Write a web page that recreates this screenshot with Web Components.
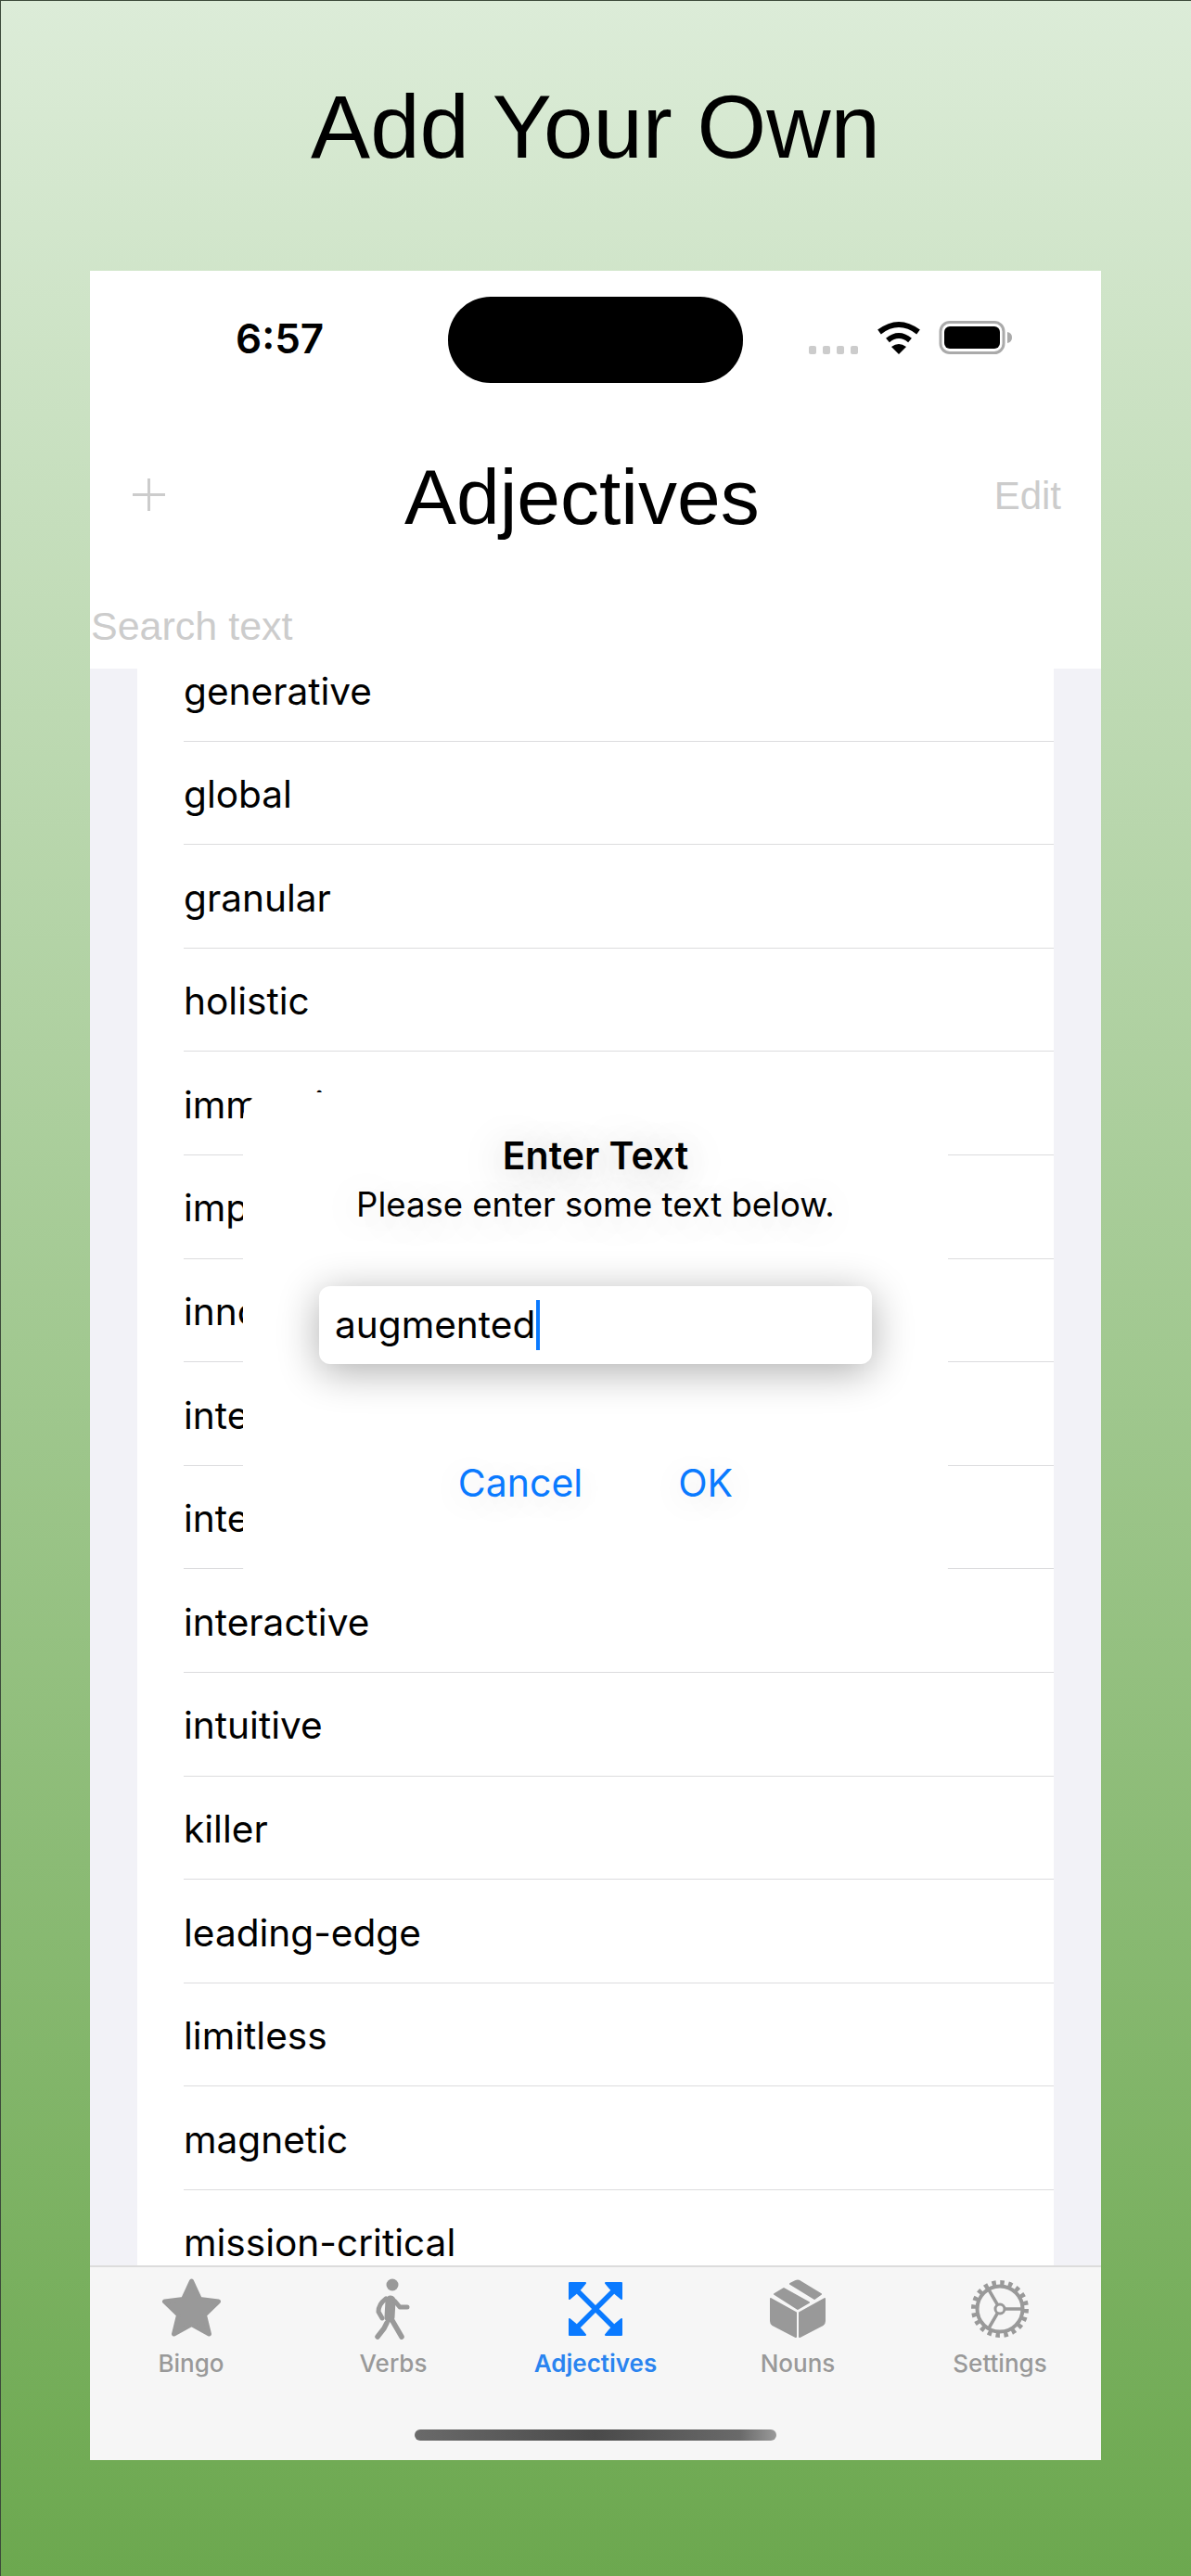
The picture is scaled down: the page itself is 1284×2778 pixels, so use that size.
<!DOCTYPE html>
<html>
<head>
<meta charset="utf-8">
<title>Add Your Own</title>
<style>
html, body { margin: 0; padding: 0; }
body { width: 1284px; height: 2778px; overflow: hidden; font-family: "Liberation Sans", sans-serif; }
</style>
</head>
<body>
<promo-page>
	<span slot="title">Add Your Own</span>
	<phone-screen>
		<status-bar slot="status" time="6:57"></status-bar>
		<nav-bar slot="nav" heading="Adjectives"></nav-bar>
		<search-box slot="search" placeholder="Search text"></search-box>
		<word-list slot="list">
			<word-row>generative</word-row>
			<word-row>global</word-row>
			<word-row>granular</word-row>
			<word-row>holistic</word-row>
			<word-row>immersive</word-row>
			<word-row>impactful</word-row>
			<word-row>innovative</word-row>
			<word-row>integrated</word-row>
			<word-row>intelligent</word-row>
			<word-row>interactive</word-row>
			<word-row>intuitive</word-row>
			<word-row>killer</word-row>
			<word-row>leading-edge</word-row>
			<word-row>limitless</word-row>
			<word-row>magnetic</word-row>
			<word-row>mission-critical</word-row>
		</word-list>
		<tab-bar slot="tabs">
			<tab-item label="Bingo" icon="star"></tab-item>
			<tab-item label="Verbs" icon="walk"></tab-item>
			<tab-item label="Adjectives" icon="expand" active></tab-item>
			<tab-item label="Nouns" icon="box"></tab-item>
			<tab-item label="Settings" icon="gear"></tab-item>
		</tab-bar>
		<text-dialog slot="dialog" heading="Enter Text" message="Please enter some text below." value="augmented"></text-dialog>
	</phone-screen>
</promo-page>

<script>
const ICONS = {
	star: `<svg width="69" height="66" viewBox="0 0 69 66"><path fill="#999" stroke="#999" stroke-width="5" stroke-linejoin="round" d="M34.5 3 L43.5 22.5 L63.5 25 L48.5 39.5 L53.5 60 L34.5 49.5 L15.5 60 L20.5 39.5 L5.5 25 L25.5 22.5 Z"/></svg>`,
	walk: `<svg width="42" height="66" viewBox="0 0 42 66"><g fill="none" stroke="#999" stroke-linecap="round" stroke-linejoin="round"><path stroke-width="11" d="M18 24 L17 42"/><path stroke-width="5" d="M13 22 Q5 28 5 36 L9 43"/><path stroke-width="5" d="M23 25 L28 31 L36 31"/><path stroke-width="5.5" d="M19 44 L30 63"/><path stroke-width="5.5" d="M14 48 L11 54 L4 63"/></g><circle cx="20" cy="7" r="6.5" fill="#999"/></svg>`,
	expand: `<svg width="58" height="58" viewBox="0 0 58 58"><path stroke="#0a7aff" stroke-width="5.5" d="M8 8 L50 50 M50 8 L8 50"/><g fill="#0a7aff" stroke="#0a7aff" stroke-width="2" stroke-linejoin="round"><path d="M1 1 H18 L13 7 L7 13 L1 18 Z"/><path d="M57 1 H40 L45 7 L51 13 L57 18 Z"/><path d="M1 57 H18 L13 51 L7 45 L1 40 Z"/><path d="M57 57 H40 L45 51 L51 45 L57 40 Z"/></g></svg>`,
	box: `<svg width="60" height="64" viewBox="0 0 60 64"><g fill="#999" stroke="#999" stroke-width="2" stroke-linejoin="round"><path d="M1 21 L28 36 V62 L3 49 Q1 48 1 45 Z"/><path d="M59 21 L32 36 V62 L57 49 Q59 48 59 45 Z"/><path d="M5 16 L15 10 L42 25 L30 32 Z"/><path d="M22 5 L28 2 Q30 1 32 2 L55 16 L48 21 Z"/></g></svg>`,
	gear: `<svg width="66" height="66" viewBox="0 0 66 66"><g fill="none" stroke="#999"><circle cx="33" cy="33" r="24.5" stroke-width="4"/><circle cx="33" cy="33" r="28" stroke-width="6" stroke-dasharray="4.4 4.4"/><circle cx="33" cy="33" r="5" stroke-width="3"/><path stroke-width="3.5" d="M38 33 H58 M30.5 28.7 L20.5 11.5 M30.5 37.3 L20.5 54.5"/></g></svg>`,
};

class PromoPage extends HTMLElement {
	constructor() {
		super();
		this.attachShadow({ mode: 'open' });
		this.shadowRoot.innerHTML = `
    <style>
      :host {
        display: block;
        box-sizing: border-box;
        width: 1284px;
        height: 2778px;
        padding: 0 97px;
        background: linear-gradient(#dcecd8, #6ca84f);
        box-shadow: inset 1px 1px 0 #3c4a3a;
      }
      h1 {
        margin: 0;
        height: 292px;
        padding-top: 82px;
        box-sizing: border-box;
        text-align: center;
        font: 400 96px/110px "Liberation Sans", sans-serif;
        color: #000;
      }
    </style>
    <h1><slot name="title"></slot></h1>
    <slot></slot>`;
	}
}
customElements.define('promo-page', PromoPage);

class PhoneScreen extends HTMLElement {
	constructor() {
		super();
		this.attachShadow({ mode: 'open' });
		this.shadowRoot.innerHTML = `
    <style>
      :host {
        display: flex;
        flex-direction: column;
        position: relative;
        width: 1090px;
        height: 2361px;
        background: #fff;
        overflow: hidden;
      }
    </style>
    <slot name="status"></slot>
    <slot name="nav"></slot>
    <slot name="search"></slot>
    <slot name="list"></slot>
    <slot name="tabs"></slot>
    <slot name="dialog"></slot>`;
	}
}
customElements.define('phone-screen', PhoneScreen);

class StatusBar extends HTMLElement {
	constructor() {
		super();
		this.attachShadow({ mode: 'open' });
		this.shadowRoot.innerHTML = `
    <style>
      :host {
        display: flex;
        align-items: flex-start;
        box-sizing: border-box;
        height: 149px;
        padding: 28px 0 0 157px;
      }
      .time {
        width: 95px;
        margin-top: 23px;
        font: 600 44px/44px Inter, sans-serif;
        color: #000;
        white-space: nowrap;
      }
      .island {
        width: 318px;
        height: 93px;
        margin-left: 134px;
        border-radius: 46px;
        background: #000;
      }
      svg { margin: 26px 0 0 71px; }
    </style>
    <div class="time">${this.getAttribute('time')}</div>
    <div class="island"></div>
    <svg width="220" height="38" viewBox="0 0 220 38">
      <g fill="#ccc">
        <rect x="0" y="27" width="8" height="9" rx="2"/>
        <rect x="15" y="27" width="8" height="9" rx="2"/>
        <rect x="30" y="27" width="8" height="9" rx="2"/>
        <rect x="45" y="27" width="8" height="9" rx="2"/>
      </g>
      <g fill="none" stroke="#000" stroke-width="6">
        <path d="M76 12 Q97 -4 118 12"/>
        <path d="M85 21 Q97 11 109 21"/>
      </g>
      <path d="M89 28 Q97 22 105 28 L97 36 Z" fill="#000"/>
      <rect x="142" y="1.5" width="68" height="33" rx="10" fill="none" stroke="#aaa" stroke-width="3"/>
      <rect x="146" y="6" width="60" height="24" rx="6" fill="#000"/>
      <path d="M214 12 Q219 13 219 18 Q219 23 214 24 Z" fill="#aaa"/>
    </svg>`;
	}
}
customElements.define('status-bar', StatusBar);

class NavBar extends HTMLElement {
	constructor() {
		super();
		this.attachShadow({ mode: 'open' });
		this.shadowRoot.innerHTML = `
    <style>
      :host {
        display: flex;
        align-items: center;
        justify-content: space-between;
        box-sizing: border-box;
        height: 190px;
        padding: 0 43px 0 46px;
      }
      svg { display: block; margin-top: -6px; }
      .title {
        font: 400 84px/96px "Liberation Sans", sans-serif;
        color: #000;
        margin-left: 5px;
      }
      .edit {
        margin-top: -2px;
        font: 400 42px/48px "Liberation Sans", sans-serif;
        color: #ccc;
      }
    </style>
    <svg width="35" height="35" viewBox="0 0 35 35"><path d="M17.5 0 V35 M0 17.5 H35" stroke="#ccc" stroke-width="3" fill="none"/></svg>
    <div class="title">${this.getAttribute('heading')}</div>
    <div class="edit">Edit</div>`;
	}
}
customElements.define('nav-bar', NavBar);

class SearchBox extends HTMLElement {
	constructor() {
		super();
		this.attachShadow({ mode: 'open' });
		this.shadowRoot.innerHTML = `
    <style>
      :host {
        display: block;
        box-sizing: border-box;
        height: 90px;
        padding: 19px 0 0 1px;
        font: 400 43px/50px "Liberation Sans", sans-serif;
        color: #ccc;
      }
    </style>
    ${this.getAttribute('placeholder')}`;
	}
}
customElements.define('search-box', SearchBox);

class WordList extends HTMLElement {
	constructor() {
		super();
		this.attachShadow({ mode: 'open' });
		this.shadowRoot.innerHTML = `
    <style>
      :host {
        display: block;
        flex: 1;
        min-height: 0;
        overflow: hidden;
        padding: 0 51px;
        background: #f2f2f7;
      }
      .rows {
        margin-top: -33px;
        background: #fff;
      }
    </style>
    <div class="rows"><slot></slot></div>`;
	}
}
customElements.define('word-list', WordList);

class WordRow extends HTMLElement {
	constructor() {
		super();
		this.attachShadow({ mode: 'open' });
		this.shadowRoot.innerHTML = `
    <style>
      :host {
        display: block;
        padding-left: 50px;
        font: 400 40.6px/1 Inter, sans-serif;
        color: #000;
      }
      div {
        box-sizing: border-box;
        display: flex;
        align-items: center;
        height: 111.6px;
        padding-top: 5px;
        border-bottom: 1.5px solid #dcdcde;
      }
    </style>
    <div><slot></slot></div>`;
	}
}
customElements.define('word-row', WordRow);

class TabBar extends HTMLElement {
	constructor() {
		super();
		this.attachShadow({ mode: 'open' });
		this.shadowRoot.innerHTML = `
    <style>
      :host {
        display: block;
        box-sizing: border-box;
        height: 210px;
        padding-top: 12px;
        background: #f6f6f6;
        border-top: 2px solid #dcdcdc;
      }
      .items {
        display: grid;
        grid-template-columns: repeat(5, 1fr);
      }
      .home {
        width: 390px;
        height: 12px;
        margin: 55px auto 0;
        border-radius: 6px;
        background: linear-gradient(90deg, #6a6a6a, #4a4a4a 50%, #6a6a6a 90%, #9a9a9a);
      }
    </style>
    <div class="items"><slot></slot></div>
    <div class="home"></div>`;
	}
}
customElements.define('tab-bar', TabBar);

class TabItem extends HTMLElement {
	constructor() {
		super();
		this.attachShadow({ mode: 'open' });
		this.shadowRoot.innerHTML = `
    <style>
      :host {
        display: flex;
        flex-direction: column;
        align-items: center;
        font: 500 26px/32px Inter, sans-serif;
        color: #999;
      }
      :host([active]) { color: #2a84f0; font-weight: 600; }
      .icon {
        display: flex;
        align-items: center;
        justify-content: center;
        height: 66px;
        margin-bottom: 10px;
      }
    </style>
    <div class="icon">${ICONS[this.getAttribute('icon')]}</div>
    <div>${this.getAttribute('label')}</div>`;
	}
}
customElements.define('tab-item', TabItem);

class TextDialog extends HTMLElement {
	constructor() {
		super();
		this.attachShadow({ mode: 'open' });
		this.shadowRoot.innerHTML = `
    <style>
      :host {
        display: flex;
        flex-direction: column;
        align-items: center;
        position: absolute;
        left: 165px;
        top: 886px;
        box-sizing: border-box;
        width: 760px;
        height: 540px;
        padding-top: 44px;
        border-radius: 28px;
        background: #fff;
        font-family: Inter, sans-serif;
        color: #000;
      }
      .title {
        font: 600 41px/48px Inter, sans-serif;
        text-shadow: 0 6px 44px rgba(0,0,0,.28);
      }
      .message {
        margin-top: 6px;
        font: 400 36.5px/46px Inter, sans-serif;
        text-shadow: 0 6px 44px rgba(0,0,0,.18);
      }
      .field {
        display: flex;
        align-items: center;
        box-sizing: border-box;
        width: 596px;
        height: 84px;
        margin-top: 65px;
        padding-left: 17px;
        border-radius: 12px;
        background: #fff;
        box-shadow: 0 8px 44px rgba(0,0,0,.32);
        font: 400 40.6px/1 Inter, sans-serif;
      }
      .caret {
        width: 4px;
        height: 54px;
        margin-left: 1px;
        background: #0a7aff;
      }
      .actions {
        display: flex;
        gap: 103px;
        margin-top: 102px;
        font: 400 41px/52px Inter, sans-serif;
        color: #0a7aff;
        text-shadow: 0 6px 36px rgba(0,0,0,.14);
      }
    </style>
    <div class="title">${this.getAttribute('heading')}</div>
    <div class="message">${this.getAttribute('message')}</div>
    <div class="field"><span>${this.getAttribute('value')}</span><div class="caret"></div></div>
    <div class="actions"><span>Cancel</span><span>OK</span></div>`;
	}
}
customElements.define('text-dialog', TextDialog);
</script>
</body>
</html>
